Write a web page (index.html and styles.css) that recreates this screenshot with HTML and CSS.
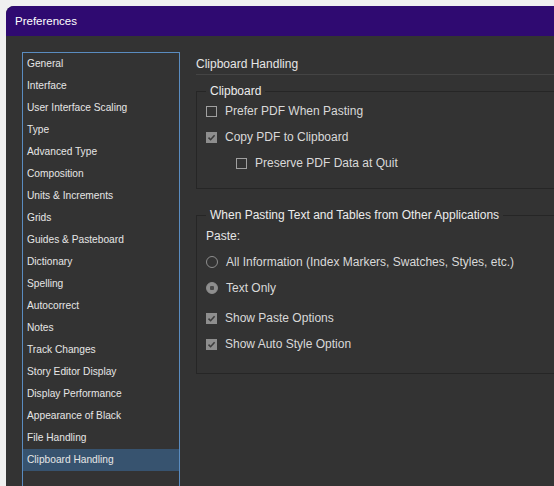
FILE: index.html
```html
<!DOCTYPE html>
<html lang="en">

<head>
    <meta charset="UTF-8">
    <meta name="viewport" content="width=device-width, initial-scale=1.0">
    <title>Preferences</title>
    <link rel="stylesheet" href="styles.css">
</head>

<body>
    <div class="window">
        <header class="title-bar">Preferences</header>
        <section class="window-body">
            <ul class="nav-list">
                <li class="nav-item">General</li>
                <li class="nav-item">Interface</li>
                <li class="nav-item">User Interface Scaling</li>
                <li class="nav-item">Type</li>
                <li class="nav-item">Advanced Type</li>
                <li class="nav-item">Composition</li>
                <li class="nav-item">Units &amp; Increments</li>
                <li class="nav-item">Grids</li>
                <li class="nav-item">Guides &amp; Pasteboard</li>
                <li class="nav-item">Dictionary</li>
                <li class="nav-item">Spelling</li>
                <li class="nav-item">Autocorrect</li>
                <li class="nav-item">Notes</li>
                <li class="nav-item">Track Changes</li>
                <li class="nav-item">Story Editor Display</li>
                <li class="nav-item">Display Performance</li>
                <li class="nav-item">Appearance of Black</li>
                <li class="nav-item">File Handling</li>
                <li class="nav-item active">Clipboard Handling</li>
            </ul>

            <section class="panel">
                <h2 class="panel-title">Clipboard Handling</h2>

                <fieldset class="group group-clipboard">
                    <legend class="group-legend">Clipboard</legend>
                    <label class="option">
                        <span class="check"></span>
                        Prefer PDF When Pasting
                    </label>
                    <label class="option">
                        <span class="check checked">
                            <svg viewBox="0 0 11 11" width="11" height="11"><path d="M2.5 5.6 L4.6 7.7 L8.6 3.3" fill="none" stroke="#3c3c3c" stroke-width="1.6"/></svg>
                        </span>
                        Copy PDF to Clipboard
                    </label>
                    <label class="option option-sub">
                        <span class="check"></span>
                        Preserve PDF Data at Quit
                    </label>
                </fieldset>

                <fieldset class="group group-paste">
                    <legend class="group-legend">When Pasting Text and Tables from Other Applications</legend>
                    <div class="paste-label">Paste:</div>
                    <label class="option">
                        <span class="radio"></span>
                        All Information (Index Markers, Swatches, Styles, etc.)
                    </label>
                    <label class="option">
                        <span class="radio selected"></span>
                        Text Only
                    </label>
                    <label class="option option-gap">
                        <span class="check checked">
                            <svg viewBox="0 0 11 11" width="11" height="11"><path d="M2.5 5.6 L4.6 7.7 L8.6 3.3" fill="none" stroke="#3c3c3c" stroke-width="1.6"/></svg>
                        </span>
                        Show Paste Options
                    </label>
                    <label class="option">
                        <span class="check checked">
                            <svg viewBox="0 0 11 11" width="11" height="11"><path d="M2.5 5.6 L4.6 7.7 L8.6 3.3" fill="none" stroke="#3c3c3c" stroke-width="1.6"/></svg>
                        </span>
                        Show Auto Style Option
                    </label>
                </fieldset>
            </section>
        </section>
    </div>
</body>

</html>
```

FILE: styles.css
```css
html,
body {
    padding: 0;
    margin: 0;

    height: 100%;
    width: 100%;
    overflow: hidden;
}

body {
    background-color: #f0f0f0;
    font-family: "Liberation Sans", Arial, sans-serif;
    padding: 6px 0 0 6px;
    box-sizing: border-box;
}

.window {
    height: 100%;
    overflow: hidden;

    background-color: #333333;
    border-radius: 8px 0 0 0;
}

.title-bar {
    height: 30px;
    padding-left: 9px;

    background-color: #2f0a71;
    color: #ffffff;

    line-height: 31px;
    font-size: 11.5px;
}

.window-body {
    display: flex;
    align-items: flex-start;

    height: calc(100% - 30px);
    padding: 16px 0 0 16px;
    box-sizing: border-box;
}

.nav-list {
    list-style: none;
    margin: 0;
    padding: 0;

    flex: 0 0 156px;
    height: 100%;

    border: 1px solid #5a8cc0;
    border-bottom: 0;
}

.nav-item {
    height: 22px;
    padding-left: 4px;

    line-height: 21px;
    font-size: 10.2px;
    color: #e6e6e6;
    white-space: nowrap;
}

.active {
    background-color: #37536f;
}

.panel {
    flex: 0 0 380px;
    margin: 1px 0 0 16px;
    color: #d9d9d9;
}

.panel-title {
    margin: 0;
    height: 21px;

    font-weight: normal;
    font-size: 12px;
    line-height: 22px;
    color: #e6e6e6;

    border-bottom: 1px solid #444444;
}

.group {
    margin: 0;
    padding: 0 0 0 9px;

    border: 1px solid #262626;
}

.group-legend {
    margin: 0;
    padding: 0 4px;

    font-size: 12px;
    line-height: 14px;
    color: #ececec;
}

.group-clipboard {
    margin-top: 9px;
    padding-bottom: 12px;
}

.group-paste {
    margin-top: 19px;
    padding-bottom: 16px;
}

.option {
    display: flex;
    align-items: center;
    gap: 8px;

    height: 26px;

    font-size: 12px;
}

.option-sub {
    padding-left: 30px;
}

.option-gap {
    margin-top: 4px;
}

.paste-label {
    height: 18px;
    line-height: 18px;
    margin-top: 5px;
    margin-bottom: 4px;

    font-size: 12px;
    color: #e6e6e6;
}

.check {
    flex: 0 0 auto;
    width: 9px;
    height: 9px;

    border: 1px solid #a0a0a0;
    position: relative;
}

.check.checked {
    border-color: #8e8e8e;
    background-color: #8e8e8e;
}

.check svg {
    position: absolute;
    left: -1px;
    top: -1px;
}

.radio {
    flex: 0 0 auto;
    width: 12px;
    height: 12px;

    border: 1px solid #8e8e8e;
    border-radius: 50%;
    box-sizing: border-box;
}

.radio.selected {
    background: radial-gradient(circle, #4a4a4a 0 2px, #8e8e8e 2.5px);
}
```
